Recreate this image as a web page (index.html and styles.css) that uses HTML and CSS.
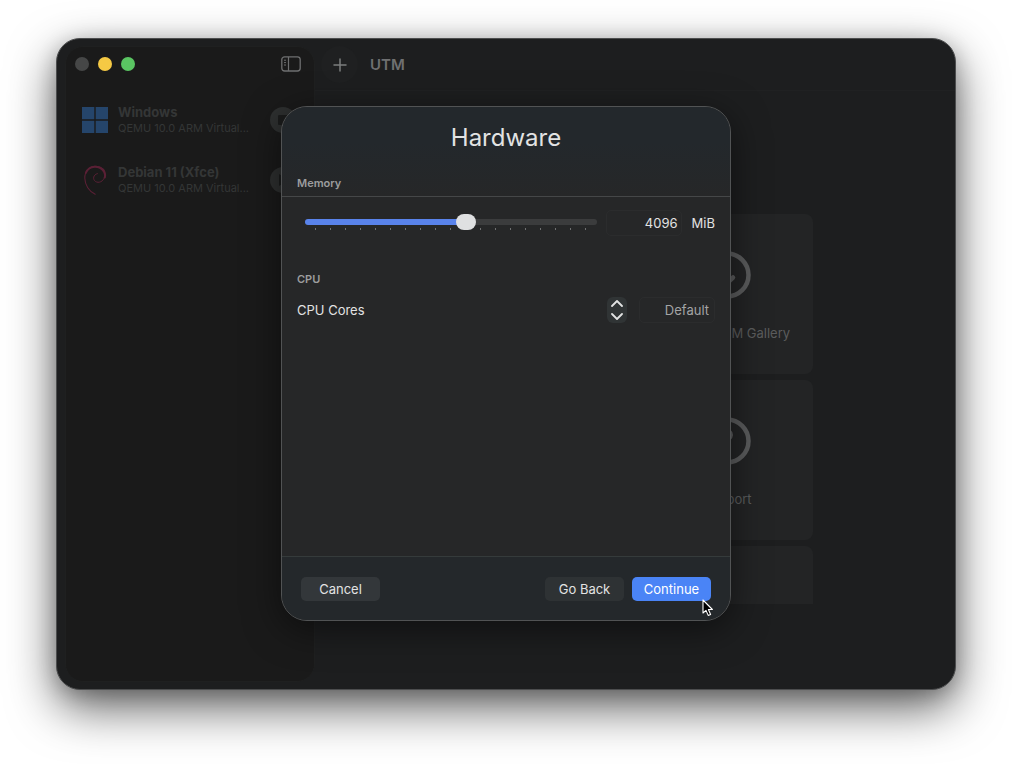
FILE: index.html
```html
<!DOCTYPE html>
<html lang="en">
<head>
    <meta charset="utf-8">
    <title>UTM</title>
    <link rel="stylesheet" href="styles.css">
</head>
<body>
    <div class="window">
        <aside class="sidebar">
            <div class="sidebar-top">
                <span class="light light-off"></span>
                <span class="light light-yellow"></span>
                <span class="light light-green"></span>
                <button type="button" class="icon-button" aria-label="Toggle sidebar">
                    <svg width="20" height="16" viewBox="0 0 20 16" fill="none" stroke="currentColor">
                        <rect x="0.8" y="0.8" width="18.4" height="14.2" rx="2.8" stroke-width="1.3"/>
                        <path d="M7.5 1v14" stroke-width="1.2"/>
                        <path d="M3 4.2h2M3 6.6h2M3 9h2" stroke-width="1"/>
                    </svg>
                </button>
            </div>
            <ul class="vm-list">
                <li class="vm">
                    <svg class="vm-logo" width="26" height="26" viewBox="0 0 26 26" fill="#25456b">
                        <path d="M0 0h12.3v12.3H0zM13.7 0H26v12.3H13.7zM0 13.7h12.3V26H0zM13.7 13.7H26V26H13.7z"/>
                    </svg>
                    <div class="vm-text">
                        <div class="vm-name">Windows</div>
                        <div class="vm-detail">QEMU 10.0 ARM Virtual...</div>
                    </div>
                    <button type="button" class="vm-action" aria-label="Stop Windows">
                        <svg width="10" height="10" viewBox="0 0 10 10"><rect width="10" height="10" rx="1" fill="#1b1c1c"/></svg>
                    </button>
                </li>
                <li class="vm">
                    <svg class="vm-logo" width="26" height="30" viewBox="0 0 26 30" fill="none" stroke="#5a2035" stroke-linecap="round">
                        <path d="M22.5 10.5C24.5 5.5 19.5 1.2 13.5 1.4C7 1.6 2.6 6.6 2.8 13.2C3 20 7 26.4 13.2 29.2" stroke-width="1.1"/>
                        <path d="M22.8 12.5C24.2 7.5 19.5 1.4 12.6 1.7C8.2 2 5.2 4.4 3.8 8" stroke-width="2"/>
                        <path d="M22.5 12C21.6 16.6 16.6 18.6 13.4 16.4C10.4 14.2 11.2 9.6 15.4 8.6" stroke-width="1"/>
                    </svg>
                    <div class="vm-text">
                        <div class="vm-name">Debian 11 (Xfce)</div>
                        <div class="vm-detail">QEMU 10.0 ARM Virtual...</div>
                    </div>
                    <button type="button" class="vm-action" aria-label="Start Debian">
                        <svg width="10" height="12" viewBox="0 0 10 12"><path d="M1 0l9 6-9 6z" fill="#1b1c1c"/></svg>
                    </button>
                </li>
            </ul>
        </aside>

        <main class="content">
            <header class="toolbar">
                <button type="button" class="add-button" aria-label="New virtual machine">
                    <svg width="14" height="14" viewBox="0 0 14 14" stroke="currentColor" stroke-width="1.5" stroke-linecap="round"><path d="M7 1v12M1 7h12"/></svg>
                </button>
                <span class="app-name">UTM</span>
            </header>
            <div class="cards">
                <a class="card" href="#">
                    <svg width="48" height="48" viewBox="0 0 48 48" fill="none" stroke="currentColor" stroke-width="4.5" stroke-linecap="round" stroke-linejoin="round">
                        <circle cx="24" cy="24" r="21.5"/>
                        <path d="M22 13v21M13.5 26.5l8.500 7.500 8-7.500"/>
                    </svg>
                    Browse UTM Gallery
                </a>
                <a class="card" href="#">
                    <svg width="48" height="48" viewBox="0 0 48 48" fill="none" stroke="currentColor" stroke-width="4.5" stroke-linecap="round">
                        <circle cx="24" cy="24" r="21.5"/>
                        <path d="M17 18c1-6 11-6 11 0c0 4-5 4-5 9M23 34v0.5" stroke-width="4"/>
                    </svg>
                    Support
                </a>
                <div class="card card-cut"></div>
            </div>
        </main>

        <div class="overlay">
            <form class="dialog" role="dialog" aria-labelledby="dialog-title">
                <div class="dialog-head">
                    <h1 id="dialog-title">Hardware</h1>
                    <h2>Memory</h2>
                </div>
                <div class="dialog-body">
                    <div class="row">
                        <div class="slider">
                            <input type="range" min="0" max="18" value="10" aria-label="Memory">
                        </div>
                        <input type="text" class="field field-memory" id="memory" value="4096">
                        <label class="unit" for="memory">MiB</label>
                    </div>
                    <h2>CPU</h2>
                    <div class="row row-cpu">
                        <label class="row-label" for="cores">CPU Cores</label>
                        <button type="button" class="stepper" aria-label="Change cores">
                            <svg width="12" height="20" viewBox="0 0 12 20" fill="none" stroke="currentColor" stroke-width="1.8" stroke-linecap="round" stroke-linejoin="round"><path d="M1 6l5-5 5 5M1 14l5 5 5-5"/></svg>
                        </button>
                        <input type="text" class="field" id="cores" placeholder="Default">
                    </div>
                </div>
                <div class="dialog-foot">
                    <button type="button" class="btn">Cancel</button>
                    <span class="spacer"></span>
                    <button type="button" class="btn btn-quiet">Go Back</button>
                    <div class="primary">
                        <button type="submit" class="btn btn-primary">Continue</button>
                        <svg class="cursor" width="12" height="18" viewBox="0 0 12 18"><path d="M1 1v13l3-2.600 2.200 5 2.400-1-2.200-4.900h4z" fill="#000" stroke="#fff" stroke-width="1.100" stroke-linejoin="round"/></svg>
                    </div>
                </div>
            </form>
        </div>
    </div>
</body>
</html>
```
FILE: styles.css
```css
* {
    box-sizing: border-box;
}
body {
    margin: 0;
    padding: 38px 56px 74px;
    min-height: 100vh;
    display: flex;
    background: #fff;
    font-family: Inter, "Liberation Sans", sans-serif;
    font-size: 13px;
    line-height: 16px;
    color: #e2e3e3;
}
h1, h2, ul {
    margin: 0;
    padding: 0;
}
button {
    font: inherit;
    color: inherit;
    border: none;
    padding: 0;
    background: none;
}
svg {
    display: block;
}

/* Window */
.window {
    position: relative;
    flex: 1;
    display: flex;
    padding: 7px 0 7px 8px;
    border-radius: 24px;
    background: #1d1e1f;
    border: 1px solid #4c4d4e;
    box-shadow: 0 18px 48px rgba(0, 0, 0, 0.62), 0 4px 20px rgba(0, 0, 0, 0.2);
}

/* Sidebar */
.sidebar {
    width: 250px;
    padding: 0 13px 0 9px;
    background: #1a1a1a;
    border: 1px solid #1f2020;
    border-radius: 18px;
    color: #343636;
}
.sidebar-top {
    display: flex;
    align-items: center;
    gap: 9px;
    height: 34px;
}
.light {
    width: 14px;
    height: 14px;
    border-radius: 50%;
}
.light-off {
    background: #464747;
}
.light-yellow {
    background: #f5c944;
}
.light-green {
    background: #5ac562;
}
.icon-button {
    margin-left: auto;
    color: #6e6f70;
}
.vm-list {
    list-style: none;
    margin-top: 9px;
}
.vm {
    display: flex;
    align-items: center;
    height: 60px;
    padding-left: 7px;
}
.vm-logo {
    flex: none;
}
.vm-text {
    flex: 1;
    margin-left: 10px;
    white-space: nowrap;
}
.vm-name {
    font-weight: 700;
}
.vm-detail {
    font-size: 11px;
}
.vm-action {
    flex: none;
    width: 26px;
    height: 26px;
    margin-right: 5px;
    border-radius: 50%;
    background: #2e3030;
    display: flex;
    align-items: center;
    justify-content: center;
}

/* Main area */
.content {
    flex: 1;
    display: flex;
    flex-direction: column;
    margin-top: -7px;
}
.toolbar {
    display: flex;
    align-items: center;
    gap: 12px;
    height: 52px;
    padding-left: 6px;
    border-bottom: 1px solid #202122;
}
.add-button {
    width: 37px;
    height: 37px;
    border-radius: 50%;
    background: #1f2021;
    color: #7c7d7e;
    display: flex;
    align-items: center;
    justify-content: center;
}
.app-name {
    font-size: 15px;
    font-weight: 600;
    color: #6f7071;
}
.cards {
    display: grid;
    grid-template-columns: 172px 172px;
    grid-template-rows: 160px 160px 58px;
    column-gap: 12px;
    row-gap: 6px;
    justify-content: center;
    margin-top: 123px;
}
.card {
    grid-column: 2;
    display: flex;
    flex-direction: column;
    align-items: center;
    gap: 26px;
    padding-top: 37px;
    border-radius: 8px;
    background: #232425;
    color: #5b5c5d;
    text-decoration: none;
}
.card-cut {
    padding: 0;
    border-radius: 8px 8px 0 0;
}

/* Dialog */
.overlay {
    position: absolute;
    inset: 0;
    display: flex;
    align-items: center;
    justify-content: center;
    padding-bottom: 2px;
}
.dialog {
    width: 450px;
    height: 515px;
    display: flex;
    flex-direction: column;
    overflow: hidden;
    background: #262728;
    border: 1px solid #515354;
    border-radius: 26px;
    box-shadow: 0 8px 36px rgba(0, 0, 0, 0.5);
}
.dialog h1 {
    font-size: 24px;
    line-height: 32px;
    font-weight: 400;
    text-align: center;
}
.dialog h2 {
    font-size: 11px;
    line-height: 16px;
    font-weight: 600;
    color: #9c9d9e;
}
.dialog-head {
    padding: 15px 15px 5px;
    background: linear-gradient(#23282c 40%, #262728);
    border-bottom: 1px solid #454748;
}
.dialog-head h2 {
    margin-top: 21px;
}
.dialog-body {
    flex: 1;
    padding: 13px 15px;
}
.row {
    display: flex;
    align-items: center;
    margin-bottom: 35px;
}
.row-cpu {
    margin-top: 10px;
}
.slider {
    flex: 1;
    height: 20px;
    margin: 0 9px 0 8px;
    background: radial-gradient(circle at center, #707172 1px, transparent 1px) 3px 14px / 15px 4px repeat-x;
}
.slider input {
    appearance: none;
    display: block;
    width: 100%;
    height: 16px;
    margin: 1px 0 0;
    background: none;
}
.slider input::-webkit-slider-runnable-track {
    height: 6px;
    border-radius: 3px;
    background: linear-gradient(to right, #5983eb 55%, #3b3c3d 55%);
}
.slider input::-webkit-slider-thumb {
    appearance: none;
    width: 20px;
    height: 16px;
    margin-top: -5px;
    border-radius: 8px;
    background: #dfe0e1;
}
.field {
    width: 76px;
    height: 26px;
    padding: 0 5px 0 0;
    border: 1px solid #2b2c2d;
    border-radius: 5px;
    background: transparent;
    color: inherit;
    font: inherit;
    text-align: right;
}
.field-memory {
    padding-right: 3px;
}
.field::placeholder {
    color: #a3a4a5;
}
.unit {
    margin-left: 10px;
}
.row-label {
    flex: 1;
}
.stepper {
    width: 20px;
    height: 26px;
    margin-right: 12px;
    border-radius: 6px;
    background: #303435;
    display: flex;
    align-items: center;
    justify-content: center;
}
.dialog-foot {
    display: flex;
    align-items: flex-start;
    height: 64px;
    padding: 20px 19px;
    background: #24282b;
    border-top: 1px solid #353b3b;
}
.spacer {
    flex: 1;
}
.btn {
    display: block;
    width: 79px;
    height: 24px;
    border-radius: 5px;
    background: #33373a;
}
.btn-quiet {
    background: #2e3234;
}
.primary {
    position: relative;
    margin-left: 8px;
}
.btn-primary {
    background: #4a84f6;
    color: #fff;
}
.cursor {
    position: absolute;
    right: -3px;
    top: 22px;
}
```
